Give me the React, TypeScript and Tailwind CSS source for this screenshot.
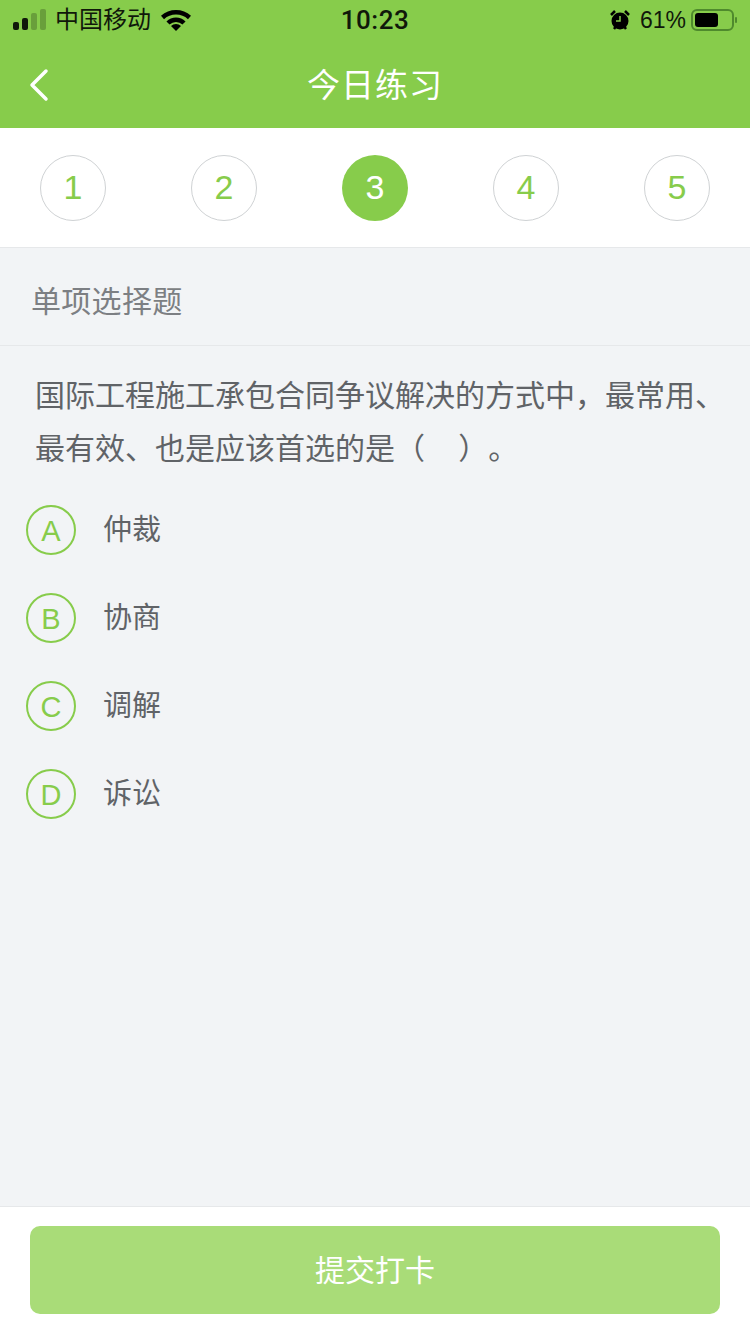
const font = "font-['Liberation_Sans','Noto_Sans_CJK_SC',sans-serif]";

const steps = [1, 2, 3, 4, 5];
const options = [
  { key: 'A', label: '仲裁' },
  { key: 'B', label: '协商' },
  { key: 'C', label: '调解' },
  { key: 'D', label: '诉讼' },
];

function StatusBar() {
  return (
    <div className="h-[40px] flex items-center justify-between text-[#10180a]">
      <div className="flex items-center">
        <svg width="34" height="22" viewBox="0 0 34 22" className="ml-[13px]">
          <rect x="0" y="13" width="6" height="8" rx="2" fill="#10180a" />
          <rect x="9" y="9" width="6" height="12" rx="2" fill="#10180a" />
          <rect x="18" y="4" width="6" height="17" rx="2" fill="#10180a" fillOpacity="0.25" />
          <rect x="27" y="0" width="6" height="21" rx="2" fill="#10180a" fillOpacity="0.25" />
        </svg>
        <span className="ml-[8px] text-[24px] leading-none">中国移动</span>
        <svg width="30" height="22" viewBox="0 0 30 22" className="ml-[10px]">
          <path d="M1.5 8.5 A20 20 0 0 1 28.5 8.5" fill="none" stroke="#000" strokeWidth="4.5" />
          <path d="M7 14 A11.5 11.5 0 0 1 23 14" fill="none" stroke="#000" strokeWidth="4.5" />
          <path d="M10 17 A7 7 0 0 1 20 17 L15 22 Z" fill="#000" />
        </svg>
      </div>
      <span className="absolute left-0 right-0 text-center font-['Roboto',sans-serif] text-[26px] font-medium leading-none tracking-[0.5px]">10:23</span>
      <div className="flex items-center pr-[12px]">
        <svg width="20" height="22" viewBox="0 0 20 22">
          <circle cx="10" cy="12" r="8.5" fill="#000" />
          <path d="M10 7 V12 H6" fill="none" stroke="#87cc4b" strokeWidth="1.5" />
          <path d="M1 6 L5 2 M19 6 L15 2 M4 20 L5.5 18 M16 20 L14.5 18" stroke="#000" strokeWidth="2.5" />
        </svg>
        <span className="ml-[10px] text-[23px] leading-none">61%</span>
        <svg width="47" height="24" viewBox="0 0 47 24" className="ml-[5px]">
          <rect x="1" y="2" width="41" height="20" rx="5" fill="none" stroke="#4f8a2d" strokeWidth="2" />
          <rect x="4" y="5" width="23" height="14" rx="3" fill="#000" />
          <rect x="44" y="9" width="2" height="6" rx="1" fill="#4f8a2d" />
        </svg>
      </div>
    </div>
  );
}

export default function App() {
  return (
    <div className={`${font} w-[750px] h-[1334px] bg-[#f2f4f6] flex flex-col relative`}>
      {/* Header */}
      <header className="h-[128px] bg-[#87cc4b] shrink-0">
        <StatusBar />
        <div className="h-[88px] flex items-center relative pt-[2px]">
          <svg width="20" height="34" viewBox="0 0 20 34" className="ml-[29px]">
            <path d="M17 3 L3 17 L17 31" fill="none" stroke="#fff" strokeWidth="3.5" strokeLinecap="round" strokeLinejoin="round" />
          </svg>
          <h1 className="absolute left-0 right-0 text-center text-white text-[33px] leading-none tracking-[1px]">今日练习</h1>
        </div>
      </header>

      {/* Steps */}
      <div className="h-[120px] bg-white border-b border-[#e6e8ea] px-[40px] flex items-center justify-between shrink-0">
        {steps.map((n) => (
          <div
            key={n}
            className={
              n === 3
                ? 'w-[66px] h-[66px] rounded-full bg-[#87cc4b] text-white flex items-center justify-center text-[34px]'
                : 'w-[66px] h-[66px] rounded-full border border-[#cfd2d4] text-[#87cc4b] flex items-center justify-center text-[34px]'
            }
          >
            {n}
          </div>
        ))}
      </div>

      {/* Question type */}
      <div className="h-[98px] border-b border-[#e6e8ea] pl-[31px] pt-[10px] flex items-center shrink-0">
        <span className="text-[#7c7f83] text-[30px] tracking-[0.3px]">单项选择题</span>
      </div>

      {/* Question */}
      <div className="pl-[35px] pt-[23px] text-[#606367] text-[30px] leading-[53px] whitespace-nowrap [text-spacing-trim:space-all] shrink-0">
        <p>国际工程施工承包合同争议解决的方式中，最常用、</p>
        <p>最有效、也是应该首选的是（&nbsp;&nbsp;&nbsp;&nbsp;）。</p>
      </div>

      {/* Options */}
      <div className="pl-[26px] pt-[30px] flex flex-col gap-[38px] flex-1">
        {options.map((o) => (
          <div key={o.key} className="flex items-center h-[50px]">
            <div className="w-[50px] h-[50px] rounded-full border-2 border-[#87cc4b] text-[#87cc4b] flex items-center justify-center text-[29px] pt-[3px]">
              {o.key}
            </div>
            <span className="ml-[27px] text-[#606367] text-[29px] relative top-[1px]">{o.label}</span>
          </div>
        ))}
      </div>

      {/* Submit */}
      <div className="h-[128px] bg-white border-t border-[#e6e8ea] px-[30px] pt-[19px] shrink-0">
        <button className="w-full h-[88px] rounded-[10px] bg-[#a9dc78] text-white text-[30px]">提交打卡</button>
      </div>
    </div>
  );
}
